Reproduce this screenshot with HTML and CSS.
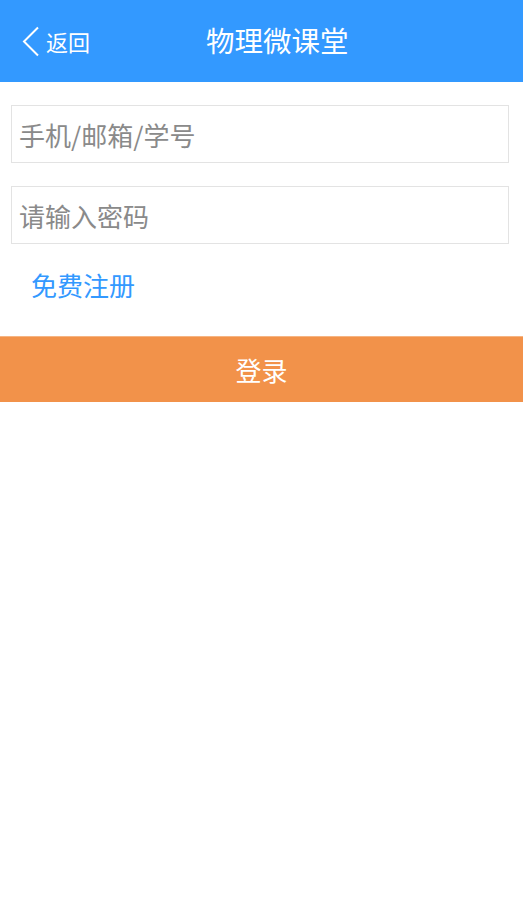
FILE: index.html
```html
<!DOCTYPE html>
<html lang="zh">
<head>
<meta charset="utf-8">
<title>物理微课堂</title>
<link rel="stylesheet" href="styles.css">
</head>
<body>
<header class="topbar">
  <a class="back">
    <svg class="chev" width="18" height="31" viewBox="0 0 18 31"><polyline points="16,1.5 2,15.5 16,29.5" fill="none" stroke="#fff" stroke-width="2"/></svg>
    <span class="back-text">返回</span>
  </a>
  <h1 class="title">物理微课堂</h1>
</header>
<main class="form">
  <div class="field"><span class="ph">手机/邮箱/学号</span></div>
  <div class="field"><span class="ph">请输入密码</span></div>
  <a class="register">免费注册</a>
</main>
<div class="login">登录</div>
</body>
</html>
```
FILE: styles.css
```css
html, body { margin: 0; padding: 0; background: #fff; }
body { font-family: "Noto Sans CJK SC", "Noto Sans", sans-serif; }
.topbar {
  height: 82px;
  background: #3399ff;
  display: flex;
  align-items: center;
  padding-left: 22px;
  color: #fff;
}
.back { display: flex; align-items: center; }
.chev { display: block; }
.back-text { font-size: 22px; margin-left: 6px; line-height: 1; font-weight: 400; }
.title { margin: -2px 0 0 116px; font-size: 28.5px; font-weight: 400; line-height: 1; }
.form { padding: 23px 14px 0 11px; }
.field {
  height: 56px;
  border: 1px solid #e3e3e3;
  display: flex;
  align-items: center;
  padding-left: 7px;
}
.field + .field { margin-top: 23px; }
.ph { font-size: 26px; color: #8a8a8a; }
.register { display: block; font-size: 26px; color: #3399ff; padding-left: 20px; line-height: 36px; margin-top: 23px; }
.login {
  margin-top: 33px;
  height: 65px;
  border-top: 1px solid #f6b482;
  background: #f2924a;
  color: #fff;
  font-size: 26px;
  display: flex;
  align-items: center;
  justify-content: center;
}
```
